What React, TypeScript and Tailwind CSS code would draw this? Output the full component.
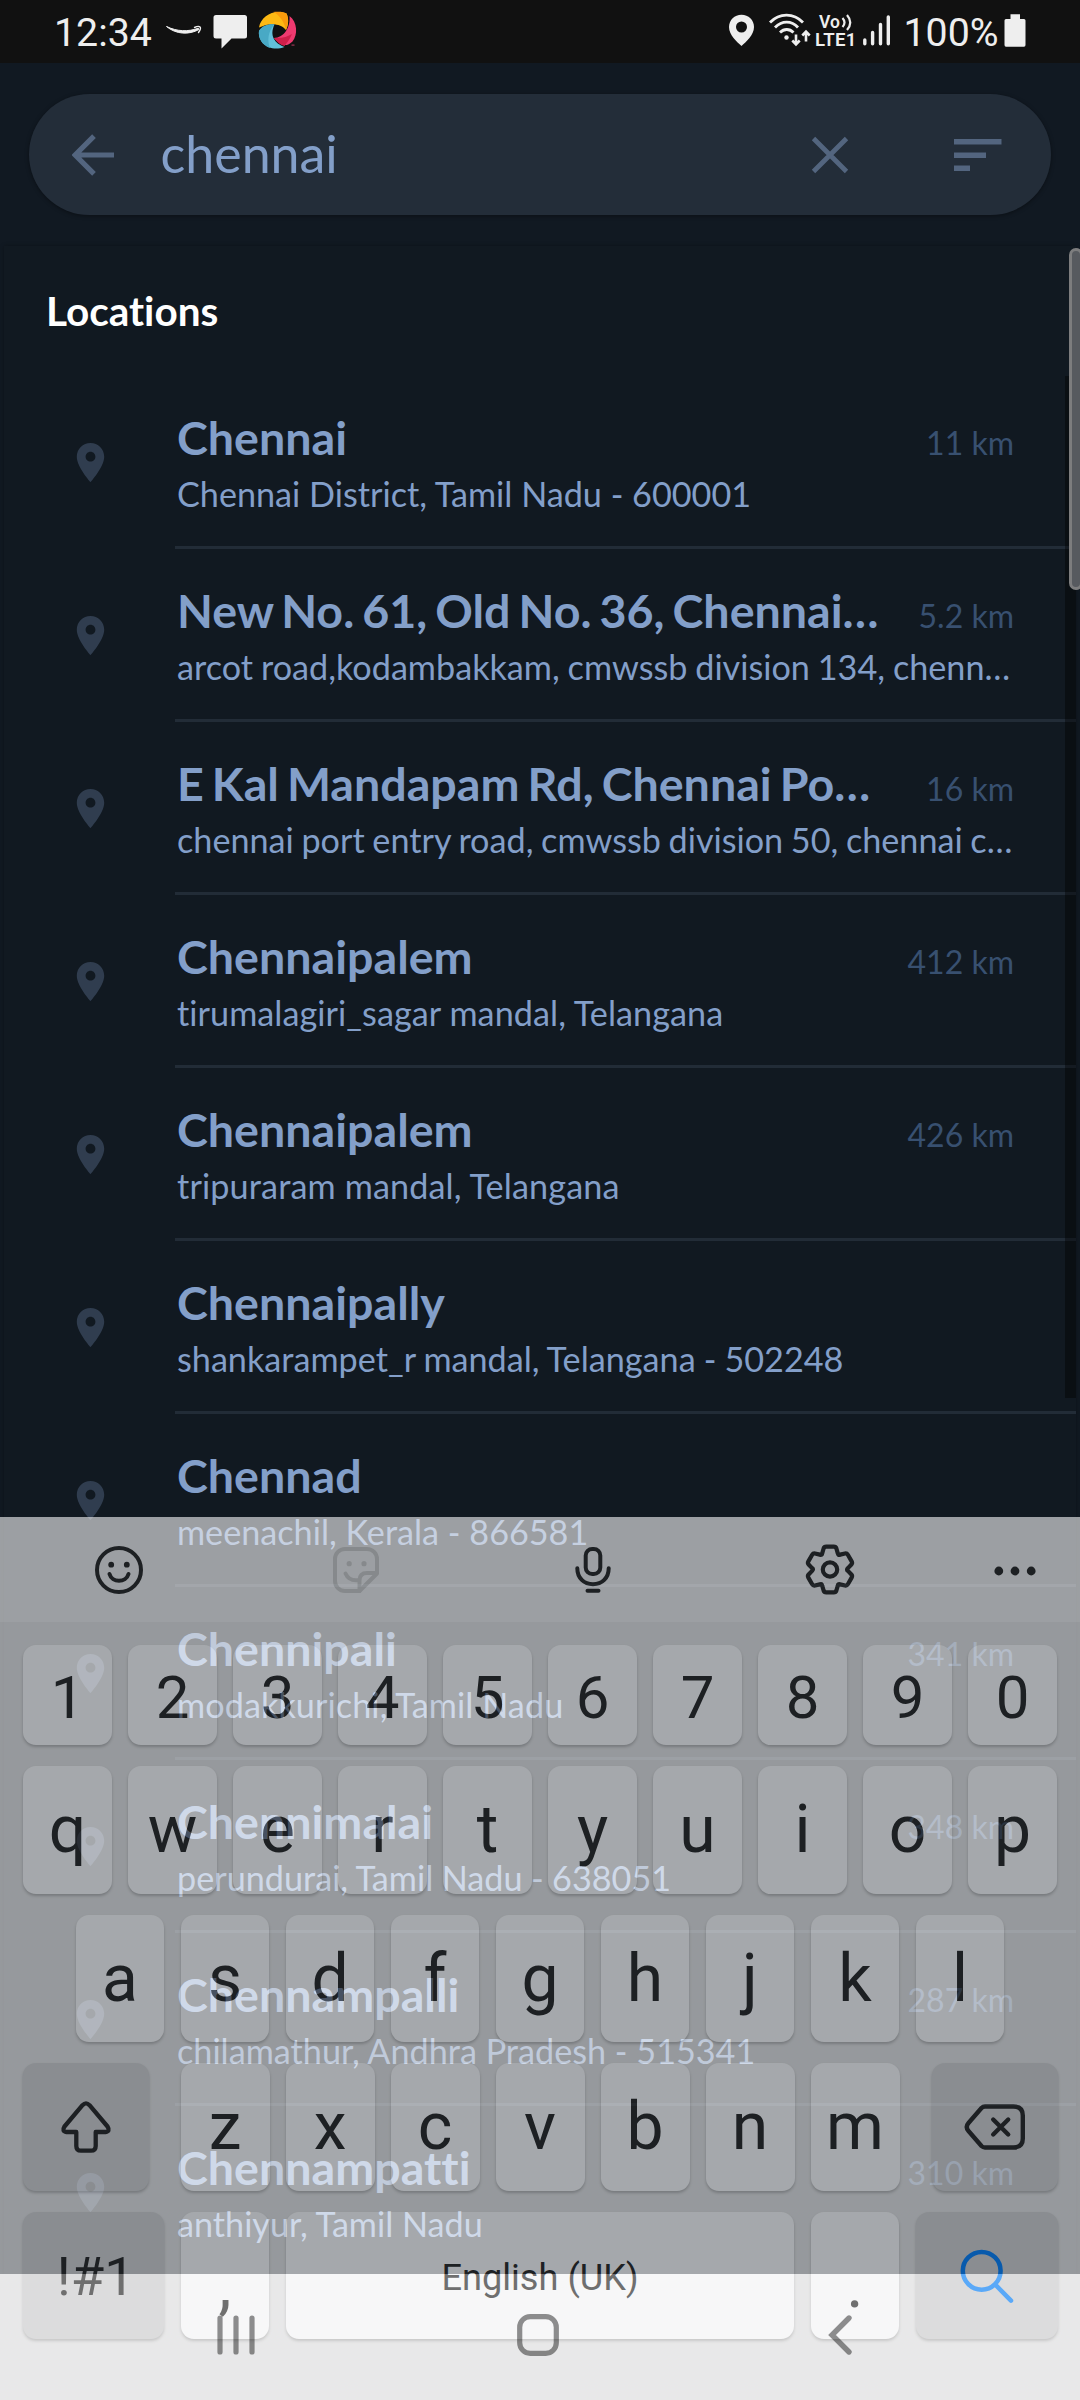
import type { ReactNode } from "react";

type Place = { title: string; sub: string; km?: string; subClass?: string };

const places: Place[] = [
  { title: "Chennai", sub: "Chennai District, Tamil Nadu - 600001", km: "11 km" },
  { title: "New No. 61, Old No. 36, Chennai…", sub: "arcot road,kodambakkam, cmwssb division 134, chenn…", km: "5.2 km", subClass: "[word-spacing:-0.9px]" },
  { title: "E Kal Mandapam Rd, Chennai Po…", sub: "chennai port entry road, cmwssb division 50, chennai c…", km: "16 km", subClass: "[word-spacing:-1.1px]" },
  { title: "Chennaipalem", sub: "tirumalagiri_sagar mandal, Telangana", km: "412 km", subClass: "tracking-[0.05px]" },
  { title: "Chennaipalem", sub: "tripuraram mandal, Telangana", km: "426 km", subClass: "tracking-[0.12px]" },
  { title: "Chennaipally", sub: "shankarampet_r mandal, Telangana - 502248", subClass: "[word-spacing:-0.7px]" },
  { title: "Chennad", sub: "meenachil, Kerala - 866581" },
  { title: "Chennipali", sub: "modakkurichi, Tamil Nadu", km: "341 km", subClass: "tracking-[0.08px]" },
  { title: "Chennimalai", sub: "perundurai, Tamil Nadu - 638051", km: "348 km", subClass: "[word-spacing:-0.3px]" },
  { title: "Chennampalli", sub: "chilamathur, Andhra Pradesh - 515341", km: "287 km" },
  { title: "Chennampatti", sub: "anthiyur, Tamil Nadu", km: "310 km" },
];

function StatusBar() {
  return (
    <div className="flex h-[63px] shrink-0 items-start bg-[#111111] pl-[54px] text-[#eeeeee]">
      <span className="mt-[8px] w-[108px] text-[39.3px] leading-[50px] whitespace-nowrap">12:34</span>
      <svg width="142" height="63" viewBox="162 0 142 63" className="shrink-0">
        <path d="M166.5 26.5C176 34.5 189 35 199 29.5L198.3 28.2C188 32 177 31.500 166.500 26.5Z" fill="#eee" stroke="#eee" strokeWidth="1" strokeLinejoin="round" />
        <path d="M194.500 27.500C197 26.300 199.500 26.400 200.200 27.200C200.800 28.200 199.800 30.800 198.500 32.500" fill="none" stroke="#eee" strokeWidth="1.4" strokeLinecap="round" />
        <path d="M216 15H244.500Q247 15 247 17.500V36Q247 38.500 244.500 38.500H231.500L221.500 48.500V38.500H216Q213.500 38.500 213.500 36V17.500Q213.500 15 216 15Z" fill="#eee" />
        <path d="M259 27.500C261 16 274 9 286.500 13.500C289 19 288.500 25 286 30C281 23.500 270 22 259 27.500Z" fill="#fdb913" />
        <path d="M273 12C281 11.500 284 12.300 286.500 13.500C289 19 288.500 25 286 30C284 21 279 14.500 273 12Z" fill="#f99b0c" />
        <path d="M289.500 16C297.500 22 298 35 292.500 41.500C286 48 280 45 274 38C284 37.500 290.500 28 289.500 16Z" fill="#ef3a70" />
        <path d="M274 38C282 38.500 288 36.500 292 34C290 39 287 43 284.500 46C280.500 45 277 42 274 38Z" fill="#cf1f4a" />
        <path d="M259 31C257.500 43 270 52.500 284.500 47C275 43.500 269 36 274.500 24.500C268 23.800 261.500 26.500 259 31Z" fill="#62c0d9" />
        <path d="M259 31C262 26 268 23.800 274.500 24.500C268 31 267 41 270 48C262 45 258 38 259 31Z" fill="#48a9c5" />
        <rect x="291.500" y="44.500" width="3" height="1.200" fill="#9e3456" />
      </svg>
      <svg width="87" height="63" viewBox="726 0 87 63" className="ml-[422px] shrink-0">
        <path fillRule="evenodd" d="M741.500 14.700C734.500 14.700 729 20 729 27C729 35 737 42 741.500 46C746 42 754 35 754 27C754 20 748.500 14.700 741.500 14.700ZM741.500 21.500A5.500 5.500 0 1 1 741.500 32.500A5.500 5.500 0 1 1 741.500 21.500Z" fill="#eee" />
        <g fill="none" stroke="#eee" strokeWidth="2.800">
          <path d="M770 22.500C779.500 12.700 793.500 12.700 803 22.500" />
          <path d="M775 27.500C782 20.200 791.500 20.200 798 27.500" />
          <path d="M780 32.500C784 28.500 789.500 28.500 793.500 32.500" />
        </g>
        <circle cx="786.500" cy="37.500" r="2.200" fill="#eee" />
        <path d="M796 34.500V43M792.300 40.500L796 44.300L799.700 40.500" fill="none" stroke="#eee" strokeWidth="2.600" />
        <path d="M806 41.500V33M802.300 35.500L806 31.700L809.700 35.500" fill="none" stroke="#eee" strokeWidth="2.600" />
      </svg>
      <div className="mt-[13px] w-[46px] pl-[2px]">
        <div className="flex h-[18px] items-center pl-[4px] text-[17.500px] leading-[18px] font-semibold">
          Vo
          <svg width="13" height="18" viewBox="0 0 13 18" className="ml-[1px]">
            <path d="M1.500 5Q5.500 9.500 1.500 14M6 2Q12.500 9.500 6 17" fill="none" stroke="#eee" strokeWidth="2.200" />
          </svg>
        </div>
        <div className="text-[18.600px] leading-[18px] font-semibold tracking-[0.3px]">LTE1</div>
      </div>
      <svg width="34" height="63" viewBox="859 0 34 63" className="shrink-0">
        <path d="M864.800 40V43.700M872.600 32.500V43.700M880.500 24.500V43.700M888.300 17V43.700" stroke="#eee" strokeWidth="3.400" strokeLinecap="round" />
      </svg>
      <span className="mt-[8px] ml-[10.500px] w-[100px] text-[39.300px] leading-[50px] whitespace-nowrap">100%</span>
      <svg width="22" height="63" viewBox="1003.500 0 22 63" className="shrink-0">
        <path d="M1010 14.300H1019.500V19H1023.500Q1025 19 1025 20.500V45Q1025 46.700 1023.500 46.700H1005.500Q1004 46.700 1004 45V20.500Q1004 19 1005.500 19H1010Z" fill="#eee" />
      </svg>
    </div>
  );
}

function SearchBar() {
  return (
    <div className="mx-[29px] mt-[31px] flex h-[121px] shrink-0 items-center rounded-full bg-[#232d39] pl-[43px] shadow-[0_1px_4px_rgba(0,0,0,0.4)]">
      <svg width="42" height="42" viewBox="-21 -21 42 42" fill="none" stroke="#53657f" strokeWidth="5.200">
        <path d="M21 0H-17M1 -18.800L-17.800 0L1 18.800" />
      </svg>
      <span className="-mt-[3px] ml-[46.500px] flex-1 font-[Lato] text-[51.900px] leading-[64px] text-[#839fc9]">chennai</span>
      <svg width="38" height="38" viewBox="-19 -19 38 38" fill="none" stroke="#53657f" strokeWidth="4.800">
        <path d="M-16.500 -16.500L16.500 16.500M16.500 -16.500L-16.500 16.500" />
      </svg>
      <svg width="48" height="34" viewBox="0 0 48 34" className="mr-[49px] ml-[105px]" fill="#53657f">
        <path d="M0 1H47.500V6.500H0ZM0 14.500H32V20H0ZM0 27.500H16V33H0Z" />
      </svg>
    </div>
  );
}

function PlaceRow({ place }: { place: Place }) {
  return (
    <div className="flex h-[173px]">
      <div className="w-[171px] shrink-0 pt-[63px] pl-[63px]">
        <svg width="47" height="47" viewBox="0 0 24 24" fill="#303d4f">
          <path d="M12 2C8.130 2 5 5.130 5 9c0 5.250 7 13 7 13s7-7.750 7-13c0-3.870-3.130-7-7-7zm0 9.500c-1.380 0-2.500-1.120-2.500-2.500s1.120-2.500 2.500-2.500 2.500 1.120 2.500 2.500-1.120 2.500-2.500 2.500z" />
        </svg>
      </div>
      <div className="min-w-0 flex-1 border-b-[3px] border-[#222c37] pt-[33px] pr-[62px] pl-[2px] text-[#839fc9]">
        <div className="flex items-baseline justify-between">
          <span className="text-[46.600px] leading-[56px] font-bold whitespace-nowrap [word-spacing:-3.3px]">{place.title}</span>
          {place.km && <span className="text-[32px] leading-[40px] whitespace-nowrap text-[#385070]">{place.km}</span>}
        </div>
        <div className={`mt-[8px] text-[34.200px] leading-[42px] whitespace-nowrap ${place.subClass ?? ""}`}>{place.sub}</div>
      </div>
    </div>
  );
}

function Key({ children, className = "" }: { children?: ReactNode; className?: string }) {
  return (
    <div className={`flex items-center justify-center rounded-[13px] shadow-[0_2px_3px_rgba(0,0,0,0.22)] ${className}`}>
      {children}
    </div>
  );
}

function gearPath() {
  const pts = [[-7.8, -16.2], [-6.4, -21], [-5.800, -22.800], [-3.800, -22.800], [3.800, -22.800], [5.800, -22.800], [6.400, -21], [7.800, -16.200], [8.300, -13.800]];
  let d = "";
  for (let k = 0; k < 6; k++) {
    const a = (k * Math.PI) / 3;
    const p = pts.map(([x, y]) => `${(x * Math.cos(a) - y * Math.sin(a)).toFixed(2)} ${(x * Math.sin(a) + y * Math.cos(a)).toFixed(2)}`);
    d += `${k === 0 ? "M" : ""}${p[0]}L${p[1]}Q${p[2]} ${p[3]}L${p[4]}Q${p[5]} ${p[6]}L${p[7]}Q${p[8]} `;
  }
  return `${d}-7.800 -16.200Z`;
}

function Toolbar() {
  const cell = "flex w-[237px] items-center justify-center";
  return (
    <div className="flex h-[105px] bg-[#eeeeef]">
      <div className={cell}>
        <svg width="52" height="52" viewBox="-26 -26 52 52" fill="none" stroke="#252525" strokeWidth="4">
          <circle r="22" />
          <circle cx="-7.800" cy="-5.300" r="2.900" fill="#252525" stroke="none" />
          <circle cx="7.800" cy="-5.300" r="2.900" fill="#252525" stroke="none" />
          <path d="M-9.500 4C-7 13 7 13 9.500 4" strokeLinecap="round" />
        </svg>
      </div>
      <div className={cell}>
        <svg width="52" height="52" viewBox="-26 -26 52 52" fill="none" stroke="#cbcbcb" strokeWidth="4" strokeLinecap="round" strokeLinejoin="round">
          <path d="M21 3.500V-11A10 10 0 0 0 11 -21H-11A10 10 0 0 0 -21 -11V11A10 10 0 0 0 -11 21H3.500Z" />
          <path d="M3.500 21V10.500Q3.500 3 11 3H20" />
          <path d="M-10.500 3.500Q-7 11.500 3 10" />
          <circle cx="-6.800" cy="-6.300" r="2.600" fill="#cbcbcb" stroke="none" />
          <circle cx="8" cy="-6.300" r="2.600" fill="#cbcbcb" stroke="none" />
        </svg>
      </div>
      <div className={cell}>
        <svg width="52" height="52" viewBox="-26 -26 52 52" fill="none" stroke="#252525" strokeWidth="4" strokeLinecap="round">
          <rect x="-7.300" y="-21" width="14.600" height="25" rx="6.500" />
          <path d="M-15.700 -1.800C-15.700 8 -9 14.200 0 14.200C9 14.200 15.700 8 15.700 -1.800M-5.500 20.800H5.500" />
        </svg>
      </div>
      <div className={cell}>
        <svg width="54" height="54" viewBox="-27 -26.500 54 54" fill="none" stroke="#252525" strokeWidth="4.200" strokeLinejoin="round">
          <path d={gearPath()} />
          <circle r="7.200" />
        </svg>
      </div>
      <div className="flex flex-1 items-center justify-center">
        <svg width="44" height="12" viewBox="-22 -6 44 12" className="mt-[3px] ml-[2px]" fill="#252525">
          <circle cx="-16.200" r="4.400" />
          <circle r="4.400" />
          <circle cx="16.200" r="4.400" />
        </svg>
      </div>
    </div>
  );
}

function Keyboard() {
  return (
    <div className="absolute inset-x-0 top-[1517px] bottom-0 flex flex-col bg-[#e4e4e5] text-[#252525] opacity-[0.63]">
      <Toolbar />
      <div className="mt-[23px] flex h-[100px] gap-[16px] px-[23px]">
        {"1234567890".split("").map((c) => (
          <Key key={c} className="flex-1 bg-[#fcfcfd] pt-[5px] text-[60px] leading-[70px]">{c}</Key>
        ))}
      </div>
      <div className="mt-[21px] flex h-[128px] gap-[16px] px-[23px]">
        {"qwertyuiop".split("").map((c) => (
          <Key key={c} className="flex-1 bg-[#fcfcfd] text-[66px] leading-[78px]">{c}</Key>
        ))}
      </div>
      <div className="mt-[21px] flex h-[127px] gap-[17px] px-[76px]">
        {"asdfghjkl".split("").map((c) => (
          <Key key={c} className="flex-1 bg-[#fcfcfd] text-[66px] leading-[78px]">{c}</Key>
        ))}
      </div>
      <div className="mt-[21px] flex h-[128px] gap-[32px] px-[22.500px]">
        <Key className="w-[126px] bg-[#d1d1d3]">
          <svg width="56" height="56" viewBox="-28 -28 56 56" fill="none" stroke="#252525" strokeWidth="4.300" strokeLinejoin="round">
            <path d="M-3.500 -21.800Q0 -25.500 3.500 -21.800L21.500 -0.500Q24.500 4.300 19.500 5H9.700V19Q9.700 23.700 5 23.700H-5Q-9.700 23.700 -9.700 19V5H-19.500Q-24.500 4.300 -21.500 -0.500Z" />
          </svg>
        </Key>
        <div className="flex flex-1 gap-[16px]">
          {"zxcvbnm".split("").map((c) => (
            <Key key={c} className="flex-1 bg-[#fcfcfd] text-[66px] leading-[78px]">{c}</Key>
          ))}
        </div>
        <Key className="w-[126px] bg-[#d1d1d3]">
          <svg width="66" height="52" viewBox="-33 -26 66 52" fill="none" stroke="#252525" strokeWidth="4.400" strokeLinecap="round" strokeLinejoin="round">
            <path d="M-10 -20.500H18.500Q27.800 -20.500 27.800 -11.500V11.500Q27.800 20.500 18.500 20.500H-10Q-12 20.500 -13.500 19L-26.500 4Q-30 0 -26.500 -4L-13.500 -19Q-12 -20.500 -10 -20.500Z" />
            <path d="M-1.800 -7.500L13.200 7.500M13.200 -7.500L-1.800 7.500" />
          </svg>
        </Key>
      </div>
      <div className="mt-[21px] flex h-[127px] gap-[17px] px-[22.500px]">
        <Key className="w-[141.500px] bg-[#d1d1d3] pt-[2px] pl-[5px] text-[54.300px] leading-[64px]">!#1</Key>
        <Key className="w-[88px] bg-[#fcfcfd] pt-[18px] text-[66px] leading-[78px]">,</Key>
        <Key className="flex-1 bg-[#fcfcfd] pt-[4px] text-[36.200px] leading-[44px]">English (UK)</Key>
        <Key className="w-[88px] bg-[#fcfcfd] pt-[18px] text-[66px] leading-[78px]">.</Key>
        <Key className="w-[141.500px] bg-[#d1d1d3]">
          <svg width="60" height="60" viewBox="-30 -30 60 60" fill="none" stroke="#0381fe" strokeWidth="4.500" strokeLinecap="round">
            <circle cx="-5.300" cy="-5.200" r="18.900" />
            <path d="M8.800 9.200L24 24.700" />
          </svg>
        </Key>
      </div>
    </div>
  );
}

function NavIcons() {
  return (
    <div className="absolute inset-x-0 bottom-0 flex h-[126px] items-start pt-[39px] pl-[216px]">
      <svg width="40" height="44" viewBox="-20 -22 40 44" stroke="#000" strokeOpacity="0.43" strokeWidth="5.200" strokeLinecap="round">
        <path d="M-16 -17V17M0 -17V17M16 -17V17" />
      </svg>
      <svg width="44" height="44" viewBox="-22 -22 44 44" className="ml-[260px]" fill="none" stroke="#000" strokeOpacity="0.43" strokeWidth="5.200">
        <rect x="-18.300" y="-18.300" width="36.600" height="36.600" rx="10.500" />
      </svg>
      <svg width="28" height="44" viewBox="-14 -22 28 44" className="ml-[266px]" fill="none" stroke="#000" strokeOpacity="0.430" strokeWidth="5.400" strokeLinecap="round">
        <path d="M9 -17L-8 0L9 17" />
      </svg>
    </div>
  );
}

export default function App() {
  return (
    <div className="relative flex h-[2400px] w-[1080px] flex-col overflow-hidden bg-[#111922] font-[Roboto,sans-serif]">
      <StatusBar />
      <SearchBar />
      <div className="mx-[4px] mt-[31px] h-[2028px] shrink-0 overflow-hidden bg-[#111921] pt-[41px] font-[Lato,sans-serif] shadow-[0_0_4px_rgba(0,0,0,0.3)] [font-variant-ligatures:none]">
        <h2 className="mb-[41px] pl-[42px] text-[40.500px] leading-[48px] font-bold text-white">Locations</h2>
        {places.map((place, i) => (
          <PlaceRow key={i} place={place} />
        ))}
      </div>
      <div className="absolute top-[376px] right-[4px] h-[1022px] w-[11px] bg-black/40" />
      <div className="absolute top-[248px] right-[-3px] h-[342px] w-[14px] rounded-[9px] border-[3px] border-[#7d7d7e] bg-[#575a5f]" />
      <div className="absolute inset-x-0 bottom-0 h-[126px] bg-[#f0f0f0]" />
      <Keyboard />
      <NavIcons />
    </div>
  );
}
